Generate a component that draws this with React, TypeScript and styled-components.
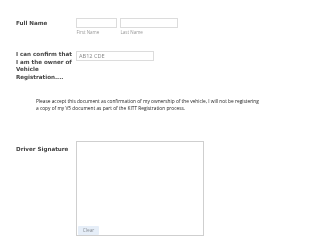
import React, { useState } from 'react';
import styled, { createGlobalStyle } from 'styled-components';

const GlobalStyle = createGlobalStyle`
  html, body {
    margin: 0;
    padding: 0;
    background: #fff;
  }
`;

const Page = styled.form`
  padding: 18px 0 0 16px;
  width: 294px;
  will-change: transform;
`;

const Row = styled.div<{ mt?: number }>`
  display: flex;
  align-items: flex-start;
  margin-top: ${props => props.mt ?? 0}px;
`;

// 왼쪽 라벨
const Label = styled.label<{ pt?: number }>`
  width: 58px;
  margin-right: 2px;
  flex: none;
  padding-top: ${props => props.pt ?? 0}px;
  font-family: "DejaVu Sans", Verdana, sans-serif;
  font-weight: bold;
  font-size: 5.6px;
  line-height: 7.7px;
  color: #444;
`;

const Fields = styled.div`
  display: flex;
  gap: 3px;
`;

const Field = styled.div`
  display: flex;
  flex-direction: column;
`;

const Input = styled.input<{ w: number }>`
  box-sizing: border-box;
  width: ${props => props.w}px;
  height: 10px;
  margin: 0;
  padding: 0 2px;
  border: 1px solid #dcdcdc;
  border-radius: 0;
  outline: none;
  font-family: "Open Sans", "Liberation Sans", sans-serif;
  font-size: 5.6px;
  color: #888;
`;

const SubLabel = styled.span`
  margin-top: 2px;
  padding-left: 0.5px;
  font-family: "Open Sans", "Liberation Sans", sans-serif;
  font-size: 4.5px;
  line-height: 5px;
  color: #999;
`;

const Notice = styled.p`
  margin: 16.5px 0 0 20px;
  width: 226px;
  font-family: "Open Sans", "Liberation Sans", sans-serif;
  font-size: 4.8px;
  line-height: 6.4px;
  color: #222;
`;

const SignaturePad = styled.div`
  box-sizing: border-box;
  width: 128px;
  height: 95px;
  border: 1px solid #cfcfcf;
  display: flex;
  flex-direction: column;
  justify-content: flex-end;
  align-items: flex-start;
  padding: 0 0 0 1px;
`;

const ClearButton = styled.button`
  height: 9px;
  width: 21px;
  margin: 0;
  padding: 0;
  border: none;
  border-radius: 1px;
  background: #e6eef8;
  font-family: "Open Sans", "Liberation Sans", sans-serif;
  font-size: 4.8px;
  line-height: 9px;
  color: #8a8f96;
  cursor: pointer;
`;

const App = () => {
  const [reg, setReg] = useState("AB12 CDE");
  return (
    <>
      <GlobalStyle />
      <Page>
        <Row>
          <Label pt={1.5}>Full Name</Label>
          <Fields>
            <Field>
              <Input w={41} />
              <SubLabel>First Name</SubLabel>
            </Field>
            <Field>
              <Input w={58} />
              <SubLabel>Last Name</SubLabel>
            </Field>
          </Fields>
        </Row>
        <Row mt={16}>
          <Label>I can confirm that I am the owner of Vehicle Registration....</Label>
          <Input w={78} value={reg} onChange={e => setReg(e.target.value)} />
        </Row>
        <Notice>
          Please accept this document as confirmation of my ownership of the vehicle, I will not be registering
          a copy of my V5 document as part of the KITT Registration process.
        </Notice>
        <Row mt={29.5}>
          <Label pt={5}>Driver Signature</Label>
          <SignaturePad>
            <ClearButton type="button">Clear</ClearButton>
          </SignaturePad>
        </Row>
      </Page>
    </>
  );
};

export default App;
